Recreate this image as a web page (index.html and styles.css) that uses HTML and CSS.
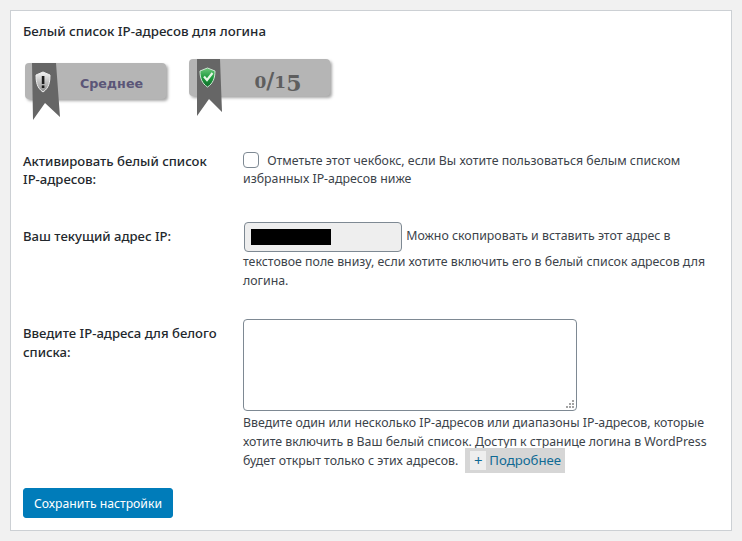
FILE: index.html
```html
<!doctype html>
<html lang="ru">

<head>
  <meta charset="utf-8" />
  <meta name="viewport" content="width=device-width, initial-scale=1">
  <title>Белый список IP-адресов для логина</title>
  <link rel="stylesheet" href="styles.css">
</head>

<body>
  <form class="card">
    <h2 class="card-title">Белый список IP-адресов для логина</h2>

    <div class="badges">
      <div class="badge badge-level">
        <svg class="ribbon" width="30" height="58" viewBox="0 0 30 58">
          <defs>
            <linearGradient id="silver" x1="0" y1="0" x2="0" y2="1">
              <stop offset="0" stop-color="#f4f4f4" />
              <stop offset="1" stop-color="#8f8f8f" />
            </linearGradient>
          </defs>
          <path d="M1 0H25L29 54L14 40L2 57Z" fill="#666" />
          <path d="M12 9L19 12C19 19 18 25 12 29C6 25 5 19 5 12Z" fill="url(#silver)" stroke="#eee" stroke-width="1" />
          <rect x="10.8" y="13" width="2.6" height="8" fill="#1c1c1c" />
          <rect x="10.8" y="22.4" width="2.6" height="2.6" fill="#1c1c1c" />
        </svg>
        <span class="badge-text">Среднее</span>
      </div>
      <div class="badge badge-score">
        <svg class="ribbon" width="30" height="58" viewBox="0 0 30 58">
          <defs>
            <linearGradient id="green" x1="0" y1="0" x2="0" y2="1">
              <stop offset="0" stop-color="#6cc77a" />
              <stop offset="0.5" stop-color="#1f9c3f" />
              <stop offset="1" stop-color="#0e6b2a" />
            </linearGradient>
          </defs>
          <path d="M2 0H25L27 53L14 40L2 57Z" fill="#666" />
          <path d="M12.5 9L20 12C20 19 18 24.5 12.5 28C7 24.5 5 19 5 12Z" fill="url(#green)" stroke="#cfe9d4" stroke-width="1" />
          <path d="M9 17.5L12 21L17.5 14" fill="none" stroke="#e6f7e6" stroke-width="2.2" />
        </svg>
        <span class="badge-score-text"><span class="small-num">0</span>/<span class="small-num">1</span><span class="low-num">5</span></span>
      </div>
    </div>

    <div class="row row-active">
      <label class="row-label" for="active">Активировать белый список IP-адресов:</label>
      <div class="row-field">
        <input class="check" type="checkbox" id="active">
        Отметьте этот чекбокс, если Вы хотите пользоваться белым списком избранных IP-адресов ниже
      </div>
    </div>

    <div class="row row-current">
      <label class="row-label row-label-top">Ваш текущий адрес IP:</label>
      <div class="row-field">
        <span class="ip-wrap"><input class="ip-input" type="text" readonly><span class="redact"></span></span>
        Можно скопировать и вставить этот адрес в текстовое поле внизу, если хотите включить его в белый список адресов для логина.
      </div>
    </div>

    <div class="row row-list">
      <label class="row-label row-label-top" for="ips">Введите IP-адреса для белого списка:</label>
      <div class="row-field">
        <textarea class="ip-list" id="ips"></textarea>
        <div>Введите один или несколько IP-адресов или диапазоны IP-адресов, которые хотите включить в Ваш белый список. Доступ к странице логина в WordPress</div>
        <div class="help-last">
          <span>будет открыт только с этих адресов.</span>
          <a class="more" href="#"><span class="more-icon">+</span><span>Подробнее</span></a>
        </div>
      </div>
    </div>

    <button class="save" type="button">Сохранить настройки</button>
  </form>
</body>

</html>
```

FILE: styles.css
```css
html,
body {
  margin: 0;
  height: 100%;
}

body {
  background-color: #f1f1f1;
  padding: 10px;
  box-sizing: border-box;
  color: #23282d;
  font-family: "Noto Sans", "Open Sans", sans-serif;
  font-size: 12.35px;
  line-height: 19px;
}

.card {
  width: 722px;
  box-sizing: border-box;
  background-color: #fff;
  border: 1px solid #ccd0d4;
  padding: 11px 12px 12px;
}

.card-title {
  margin: 0;
  font-size: 13.3px;
  line-height: 18px;
  font-weight: 500;
}

.badges {
  display: flex;
  align-items: flex-start;
  margin-top: 19px;
  height: 41px;
}

.badge {
  position: relative;
  width: 141px;
  background-color: #b5b5b5;
  border-radius: 4px;
  box-shadow: 2px 2px 3px rgba(0, 0, 0, 0.35);
  display: flex;
  align-items: center;
  justify-content: center;
}

.badge-level {
  height: 36px;
  margin: 4px 0 0 2px;
}

.badge-score {
  height: 37px;
  margin-left: 23px;
}

.ribbon {
  position: absolute;
  left: 6px;
  top: 0;
}

.badge-text {
  padding: 4px 0 0 32px;
  font-family: "DejaVu Sans", sans-serif;
  font-size: 12.7px;
  font-weight: bold;
  color: #5b5678;
}

.badge-score-text {
  padding: 8px 0 0 37px;
  font-family: "DejaVu Serif", serif;
  font-size: 22px;
  font-weight: bold;
  color: #5e5e5e;
}

.small-num {
  font-size: 17px;
}

.low-num {
  position: relative;
  top: 3px;
}

.row {
  display: grid;
  grid-template-columns: 220px 1fr;
}

.row-active {
  margin-top: 52px;
  line-height: 18px;
}

.row-current {
  margin-top: 34px;
}

.row-list {
  margin-top: 29px;
}

.row-label {
  font-size: 13.1px;
  font-weight: 500;
  padding-right: 24px;
}

.row-label-top {
  padding-top: 5px;
}

.row-field {
  color: #3c434a;
}

.check {
  appearance: none;
  width: 16px;
  height: 16px;
  margin: 0 5px 0 0;
  background-color: #fff;
  border: 1px solid #7e8993;
  border-radius: 4px;
  vertical-align: -3px;
}

.ip-wrap {
  position: relative;
  display: inline-block;
  margin: 0 1px;
  vertical-align: middle;
}

.ip-input {
  display: block;
  width: 158px;
  height: 30px;
  box-sizing: border-box;
  background-color: #eee;
  border: 1px solid #7e8993;
  border-radius: 4px;
}

.redact {
  position: absolute;
  left: 7px;
  top: 7px;
  width: 80px;
  height: 16px;
  background-color: #000;
}

.ip-list {
  display: block;
  width: 334px;
  height: 92px;
  box-sizing: border-box;
  margin-bottom: 2px;
  background-color: #fff;
  background-image: url("data:image/svg+xml,%3Csvg xmlns='http://www.w3.org/2000/svg' width='9' height='9'%3E%3Cg fill='%23a3a3a3'%3E%3Crect x='6' y='0' width='2' height='2'/%3E%3Crect x='3' y='3' width='2' height='2'/%3E%3Crect x='6' y='3' width='2' height='2'/%3E%3Crect x='0' y='6' width='2' height='2'/%3E%3Crect x='3' y='6' width='2' height='2'/%3E%3Crect x='6' y='6' width='2' height='2'/%3E%3C/g%3E%3C/svg%3E");
  background-repeat: no-repeat;
  background-position: right 1px bottom 1px;
  border: 1px solid #7e8993;
  border-radius: 4px;
  resize: none;
}

.help-last {
  display: flex;
  height: 19px;
  gap: 7px;
}

.more {
  display: flex;
  height: 25px;
  margin-top: -3px;
  padding: 3px 4px 0 5px;
  box-sizing: border-box;
  background-color: #d6d6d6;
  color: #0f6a94;
  text-decoration: none;
  font-size: 13.2px;
}

.more-icon {
  width: 16px;
  height: 19px;
  margin-right: 3px;
  background-color: #eee;
  text-align: center;
  font-size: 15px;
}

.save {
  display: block;
  width: 150px;
  height: 30px;
  margin-top: 18px;
  padding: 0;
  background-color: #007cba;
  border: 1px solid #007cba;
  border-radius: 3px;
  color: #fff;
  font-family: inherit;
  font-size: 12.2px;
}
```
